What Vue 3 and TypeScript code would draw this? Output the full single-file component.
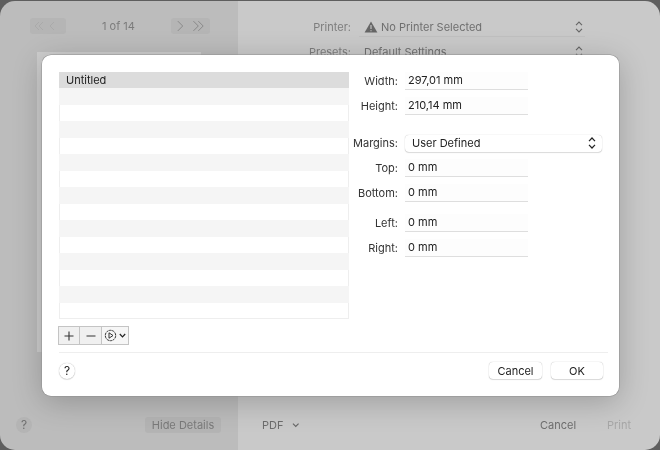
<script setup lang="ts">
const rows: string[] = Array.from({ length: 15 }, (_, i) => (i === 0 ? 'Untitled' : ''))
const sizeFields = [
  { label: 'Width:', value: '297,01 mm' },
  { label: 'Height:', value: '210,14 mm' },
]
const marginsA = [
  { label: 'Top:', value: '0 mm' },
  { label: 'Bottom:', value: '0 mm' },
]
const marginsB = [
  { label: 'Left:', value: '0 mm' },
  { label: 'Right:', value: '0 mm' },
]
</script>

<template>
  <div class="screen">
    <div class="window">
      <div class="left-pane">
        <div class="pager">
          <div class="pager-group prev">
            <svg width="34" height="12" viewBox="0 0 34 12" fill="none" stroke="#aaa" stroke-width="1">
              <path d="M9 2 5 6l4 4M13 2 9 6l4 4M24 2l-4 4 4 4" />
            </svg>
          </div>
          <span class="page-text">1 of 14</span>
          <div class="pager-group next">
            <svg width="40" height="12" viewBox="0 0 40 12" fill="none" stroke="#888" stroke-width="1">
              <path d="M7 1l5 5-5 5M23 1l5 5-5 5M28 1l5 5-5 5" />
            </svg>
          </div>
        </div>
        <div class="paper"></div>
        <div class="left-foot">
          <span class="back-help">?</span>
          <span class="hide-details">Hide Details</span>
        </div>
      </div>
      <div class="right-pane">
        <div class="back-row">
          <span class="back-label">Printer:</span>
          <div class="back-select underlined">
            <svg class="warn" width="14" height="12" viewBox="0 0 14 12">
              <path d="M7 .5 13.4 11.6H.6Z" fill="#666" />
              <path d="M7 4v4M7 9.2v1" stroke="#ccc" stroke-width="1.1" />
            </svg>
            <span>No Printer Selected</span>
            <svg class="updown" width="8" height="12" viewBox="0 0 8 12" fill="none" stroke="#666" stroke-width="1.1">
              <path d="M1 4.2 4 1l3 3.2M1 7.8 4 11l3-3.2" />
            </svg>
          </div>
        </div>
        <div class="back-row">
          <span class="back-label">Presets:</span>
          <div class="back-select">
            <span>Default Settings</span>
            <svg class="updown" width="8" height="12" viewBox="0 0 8 12" fill="none" stroke="#666" stroke-width="1.1">
              <path d="M1 4.2 4 1l3 3.2M1 7.8 4 11l3-3.2" />
            </svg>
          </div>
        </div>
        <div class="right-foot">
          <div class="pdf">
            <span>PDF</span>
            <svg width="8" height="6" viewBox="0 0 8 6" fill="none" stroke="#666" stroke-width="1.2">
              <path d="M1 1.5 4 4.5l3-3" />
            </svg>
          </div>
          <span class="back-cancel">Cancel</span>
          <span class="back-print">Print</span>
        </div>
      </div>
    </div>

    <div class="sheet">
      <div class="sheet-main">
        <div class="list-col">
          <div class="list">
            <div v-for="(row, i) in rows" :key="i" class="list-row" :class="{ selected: i === 0, stripe: i > 0 && i % 2 === 1 }">
              {{ row }}
            </div>
          </div>
          <div class="toolbar">
            <div class="tool">
              <svg width="10" height="10" viewBox="0 0 10 10" stroke="#333" stroke-width="1.1"><path d="M5 .5v9M.5 5h9" /></svg>
            </div>
            <div class="tool">
              <svg width="10" height="10" viewBox="0 0 10 10" stroke="#444" stroke-width="1.1"><path d="M.5 5h9" /></svg>
            </div>
            <div class="tool tool-wide">
              <svg width="13" height="13" viewBox="0 0 13 13" fill="none" stroke="#333" stroke-width="1">
                <circle cx="6.5" cy="6.5" r="5.2" stroke-dasharray="2.6 .6" />
                <path d="M5 3.8 9 6.5 5 9.2Z" />
              </svg>
              <svg width="7" height="5" viewBox="0 0 7 5" fill="none" stroke="#222" stroke-width="1.2"><path d="M.8 1 3.5 3.8 6.2 1" /></svg>
            </div>
          </div>
        </div>

        <div class="form-col">
          <div class="field-group size-group">
            <div v-for="f in sizeFields" :key="f.label" class="field">
              <span class="label">{{ f.label }}</span>
              <span class="input">{{ f.value }}</span>
            </div>
          </div>
          <div class="margins-row">
            <span class="label">Margins:</span>
            <div class="select">
              <span>User Defined</span>
              <svg width="8" height="12" viewBox="0 0 8 12" fill="none" stroke="#222" stroke-width="1.2">
                <path d="M1 4.2 4 1l3 3.2M1 7.8 4 11l3-3.2" />
              </svg>
            </div>
          </div>
          <div class="field-group margin-a">
            <div v-for="f in marginsA" :key="f.label" class="field">
              <span class="label">{{ f.label }}</span>
              <span class="input">{{ f.value }}</span>
            </div>
          </div>
          <div class="field-group margin-b">
            <div v-for="f in marginsB" :key="f.label" class="field">
              <span class="label">{{ f.label }}</span>
              <span class="input">{{ f.value }}</span>
            </div>
          </div>
        </div>
      </div>

      <div class="sheet-foot">
        <span class="help">?</span>
        <div class="actions">
          <button class="btn btn-cancel" type="button">Cancel</button>
          <button class="btn" type="button">OK</button>
        </div>
      </div>
    </div>
  </div>
</template>

<style>
html, body { margin: 0; background: #5e5e5e; }
</style>

<style scoped>
.screen {
  position: relative;
  width: 660px;
  height: 450px;
  overflow: hidden;
  background: #5e5e5e;
  font-family: Inter, "Liberation Sans", sans-serif;
  font-size: 11px;
  color: #2a2a2a;
  filter: blur(0.35px);
}
.window {
  display: flex;
  width: 660px;
  height: 449px;
  margin-top: 1px;
  border-radius: 15px;
  overflow: hidden;
}
.left-pane {
  width: 238px;
  display: flex;
  flex-direction: column;
  background: #bcbcbc;
}
.pager {
  display: flex;
  align-items: center;
  height: 16px;
  margin: 17px 0 0 30px;
}
.pager-group {
  display: flex;
  align-items: center;
  height: 16px;
  border-radius: 3px;
  background: #b5b5b5;
}
.prev { width: 36px; }
.next { width: 39px; margin-left: 36px; }
.page-text { margin-left: 36px; width: 33px; color: #7b7b7b; white-space: nowrap; }
.paper {
  width: 164px;
  height: 300px;
  margin: 18px 0 0 37px;
  background: #cdcdcd;
}
.left-foot {
  display: flex;
  align-items: center;
  margin-top: auto;
  height: 50px;
  padding: 0 17px 0 16px;
  justify-content: space-between;
}
.back-help {
  width: 16px;
  height: 16px;
  border-radius: 50%;
  background: #b4b4b4;
  color: #6f6f6f;
  text-align: center;
  line-height: 16px;
  font-size: 12px;
}
.hide-details {
  width: 76px;
  height: 16px;
  line-height: 16px;
  text-align: center;
  border-radius: 3px;
  background: #b4b4b4;
  color: #7a7a7a;
}
.right-pane {
  flex: 1;
  display: flex;
  flex-direction: column;
  background: #c9c9c9;
  color: #727272;
  padding-top: 16.5px;
}
.back-row {
  display: flex;
  align-items: center;
  height: 18px;
  margin-bottom: 7px;
}
.back-label { width: 113px; text-align: right; color: #7d7d7d; }
.back-select {
  width: 226px;
  margin-left: 8px;
  padding: 0 2px 0 5px;
  height: 18px;
  box-sizing: border-box;
  display: flex;
  align-items: center;
  color: #6f6f6f;
}
.underlined { box-shadow: 0 1px 0 #c0c0c0; }
.warn { margin-right: 3px; }
.updown { margin-left: auto; }
.right-foot {
  display: flex;
  align-items: center;
  margin-top: auto;
  height: 50px;
}
.pdf {
  display: flex;
  align-items: center;
  gap: 9px;
  margin-left: 24px;
  width: 38px;
  color: #6d6d6d;
}
.back-cancel { margin-left: 240px; width: 36px; color: #6e6e6e; }
.back-print { margin-left: 31px; color: #a7a7a7; }

.sheet {
  position: absolute;
  left: 42px;
  top: 55px;
  width: 577px;
  height: 341px;
  box-sizing: border-box;
  padding: 17px 11px 0 17px;
  display: flex;
  flex-direction: column;
  background: #fff;
  border-radius: 9px;
  box-shadow: 0 0 0 .5px #8f8f8f, 0 6px 30px rgba(0, 0, 0, .22);
}
.sheet-main { display: flex; flex: none; height: 280px; border-bottom: 1px solid #eee; }
.list-col { flex: none; width: 290px; }
.list {
  height: 247px;
  display: grid;
  grid-template-rows: repeat(15, 1fr);
  box-shadow: inset 0 0 0 1px #eeeeee;
}
.list-row {
  padding-left: 7px;
  line-height: 16px;
  color: #222;
  font-size: 11px;
}
.selected { background: #dcdcdc; }
.stripe { background: #f5f5f5; }
.toolbar {
  display: flex;
  height: 17px;
  margin: 7px 0 0 -1px;
  width: 69px;
  border: 1px solid #c4c4c4;
  background: #f0f0f0;
  box-sizing: content-box;
}
.tool {
  width: 20px;
  display: flex;
  align-items: center;
  justify-content: center;
  border-right: 1px solid #c4c4c4;
}
.tool + .tool { width: 21px; }
.tool + .tool.tool-wide { width: 26px; border-right: none; gap: 2px; background: #f6f6f6; }
.form-col { display: flex; flex-direction: column; }
.field-group { display: flex; flex-direction: column; }
.size-group { gap: 7px; }
.field, .margins-row { display: flex; align-items: center; height: 18px; }
.label { width: 49px; text-align: right; color: #333; white-space: nowrap; }
.input {
  width: 123px;
  height: 18px;
  line-height: 17px;
  margin-left: 7px;
  padding-left: 3px;
  box-sizing: border-box;
  border-bottom: 1px solid #dedede;
  background: #fdfdfd;
  color: #222;
}
.margins-row { margin-top: 19px; }
.select {
  margin-left: 7px;
  width: 197px;
  height: 17px;
  box-sizing: border-box;
  padding: 0 6px 0 7px;
  display: flex;
  align-items: center;
  justify-content: space-between;
  border-radius: 4px;
  background: #fff;
  box-shadow: 0 0 1px rgba(0, 0, 0, .3), 0 1px 1px rgba(0, 0, 0, .12);
  color: #222;
}
.margin-a { margin-top: 7px; gap: 7px; }
.margin-b { margin-top: 12px; gap: 7px; }
.sheet-foot {
  display: flex;
  align-items: center;
  justify-content: space-between;
  height: 35px;
  padding-right: 5px;
}
.help {
  width: 16px;
  height: 16px;
  border-radius: 50%;
  background: #fff;
  box-shadow: 0 0 1px rgba(0, 0, 0, .35), 0 1px 1px rgba(0, 0, 0, .1);
  text-align: center;
  line-height: 16px;
  font-size: 12px;
  color: #222;
}
.actions { display: flex; gap: 9px; }
.btn {
  width: 52px;
  height: 17px;
  padding: 0;
  border: none;
  border-radius: 4px;
  background: #fff;
  box-shadow: 0 0 1px rgba(0, 0, 0, .35), 0 1px 1px rgba(0, 0, 0, .12);
  font: inherit;
  color: #222;
}
.btn-cancel { width: 53px; }
</style>
